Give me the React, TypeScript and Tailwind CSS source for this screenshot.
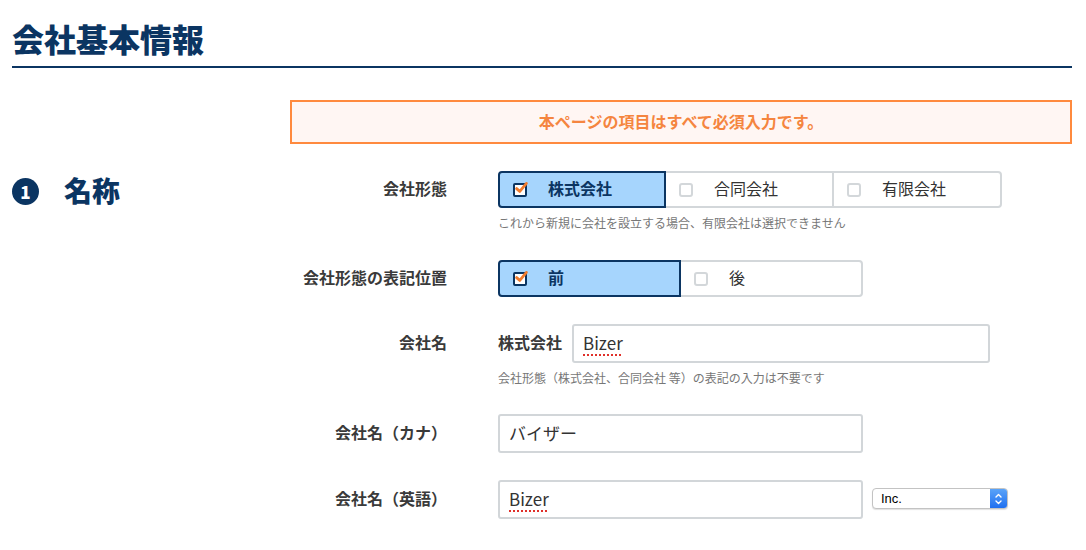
import React from "react";

function CheckBox({ checked }: { checked: boolean }) {
  if (checked) {
    return (
      <span className="relative inline-block w-[14px] h-[14px] shrink-0">
        <span className="absolute inset-0 rounded-[2px] border-2 border-[#0b3562] bg-white" />
        <svg className="absolute left-[1px] top-[-2px]" width="15" height="14" viewBox="0 0 15 14">
          <path d="M2.6 7.6 L5.8 10.4 L12.4 2.4" fill="none" stroke="#f07c2e" strokeWidth="2.8" strokeLinecap="round" strokeLinejoin="round" />
        </svg>
      </span>
    );
  }
  return <span className="inline-block w-[14px] h-[14px] shrink-0 rounded-[3px] border-2 border-[#d3d7da] bg-white" />;
}

function Segment({
  label,
  checked,
  w,
  first,
  last,
}: {
  label: string;
  checked: boolean;
  w: string;
  first?: boolean;
  last?: boolean;
}) {
  return (
    <div
      className={
        "relative flex items-center h-full border-2 pl-[13px] " +
        w +
        (first ? " rounded-l-[4px]" : " -ml-[2px]") +
        (last ? " rounded-r-[4px]" : "") +
        (checked ? " z-10 border-[#0b3562] bg-[#a6d5fd]" : " border-[#d3d7da] bg-white")
      }
    >
      <CheckBox checked={checked} />
      <span
        className={
          "ml-[21px] pb-[3px] text-[16px] leading-none " +
          (checked ? "font-bold text-[#0b3562]" : "text-[#333]")
        }
      >
        {label}
      </span>
    </div>
  );
}

function Label({ children }: { children: React.ReactNode }) {
  return (
    <div className="w-[157px] shrink-0 text-right text-[16px] font-bold text-[#3a3a3a] leading-none pb-[3px]">
      {children}
    </div>
  );
}

function TextBox({ w, children }: { w: string; children: React.ReactNode }) {
  return (
    <div className={"h-[39px] border-2 border-[#d2d6d9] rounded-[3px] bg-white flex items-center pl-[9px] pb-[1px] text-[17px] text-[#333] " + w}>
      {children}
    </div>
  );
}

function Spell({ children }: { children: React.ReactNode }) {
  return (
    <span className="underline decoration-dotted decoration-[#e0302a] decoration-2 underline-offset-[4px]">{children}</span>
  );
}

export default function App() {
  return (
    <div
      className="w-[1086px] h-[550px] bg-white px-[12px] overflow-hidden"
      style={{ fontFamily: '"Noto Sans CJK JP", "Noto Sans", sans-serif' }}
    >
      <div className="w-[1060px]">
        <h1 className="pt-[18px] pb-[8px] border-b-2 border-[#0b3562] text-[32px] leading-[40px] font-black text-[#0b3562]">
          会社基本情報
        </h1>

        <div className="grid grid-cols-[278px_1fr] mt-[32px]">
          <div />
          <div className="h-[44px] border-2 border-[#ff8a3e] bg-[#fff6f3] flex items-center justify-center pb-[2px] text-[16px] font-bold text-[#f5853f]">
            本ページの項目はすべて必須入力です。
          </div>

          <div className="pt-[27px]">
            <div className="h-[37px] mt-[2px] flex items-center">
              <span className="w-[27px] h-[27px] shrink-0 rounded-full bg-[#0b3562] text-white flex items-center justify-center text-[17px] font-black leading-none">
                1
              </span>
              <span className="ml-[25px] pb-[3px] text-[28px] font-black text-[#0b3562] leading-none">名称</span>
            </div>
          </div>

          <div className="pt-[27px]">
            {/* Row 1 */}
            <div className="flex items-center h-[37px]">
              <Label>会社形態</Label>
              <div className="ml-[51px] flex h-[37px]">
                <Segment label="株式会社" checked first w="w-[168px]" />
                <Segment label="合同会社" checked={false} w="w-[170px]" />
                <Segment label="有限会社" checked={false} last w="w-[170px]" />
              </div>
            </div>
            <div className="ml-[208px] mt-[5px] text-[12px] leading-[19px] text-[#777]">
              これから新規に会社を設立する場合、有限会社は選択できません
            </div>

            {/* Row 2 */}
            <div className="flex items-center h-[37px] mt-[28px]">
              <Label>会社形態の表記位置</Label>
              <div className="ml-[51px] flex h-[37px]">
                <Segment label="前" checked first w="w-[183px]" />
                <Segment label="後" checked={false} last w="w-[184px]" />
              </div>
            </div>

            {/* Row 3 */}
            <div className="flex items-center h-[39px] mt-[27px]">
              <Label>会社名</Label>
              <div className="ml-[51px] flex items-center">
                <span className="text-[16px] font-bold text-[#3a3a3a] leading-none pb-[3px]">株式会社</span>
                <div className="ml-[10px]">
                  <TextBox w="w-[418px]">
                    <Spell>Bizer</Spell>
                  </TextBox>
                </div>
              </div>
            </div>
            <div className="ml-[208px] mt-[5px] text-[12px] leading-[19px] text-[#777]">
              会社形態（株式会社、合同会社 等）の表記の入力は不要です
            </div>

            {/* Row 4 */}
            <div className="flex items-center h-[39px] mt-[27px]">
              <Label>会社名（カナ）</Label>
              <div className="ml-[51px]">
                <TextBox w="w-[365px]">バイザー</TextBox>
              </div>
            </div>

            {/* Row 5 */}
            <div className="flex items-center h-[39px] mt-[27px]">
              <Label>会社名（英語）</Label>
              <div className="ml-[51px] flex items-center">
                <TextBox w="w-[365px]">
                  <Spell>Bizer</Spell>
                </TextBox>
                <div
                  className="ml-[9px] w-[136px] h-[21px] rounded-[4px] border border-[#c3c3c3] bg-white flex items-stretch shadow-[0_1px_1px_rgba(0,0,0,0.12)] overflow-hidden -mt-[2px]"
                  style={{ fontFamily: '"Liberation Sans", Arial, sans-serif' }}
                >
                  <div className="flex-1 flex items-center pl-[8px] text-[13px] text-black">Inc.</div>
                  <div className="w-[17px] bg-gradient-to-b from-[#5aa3f8] to-[#1f6ff0] flex items-center justify-center">
                    <svg width="9" height="14" viewBox="0 0 9 14">
                      <path d="M2 5 L4.5 2.5 L7 5" fill="none" stroke="white" strokeWidth="1.4" strokeLinecap="round" strokeLinejoin="round" />
                      <path d="M2 9 L4.5 11.5 L7 9" fill="none" stroke="white" strokeWidth="1.4" strokeLinecap="round" strokeLinejoin="round" />
                    </svg>
                  </div>
                </div>
              </div>
            </div>
          </div>
        </div>
      </div>
    </div>
  );
}
